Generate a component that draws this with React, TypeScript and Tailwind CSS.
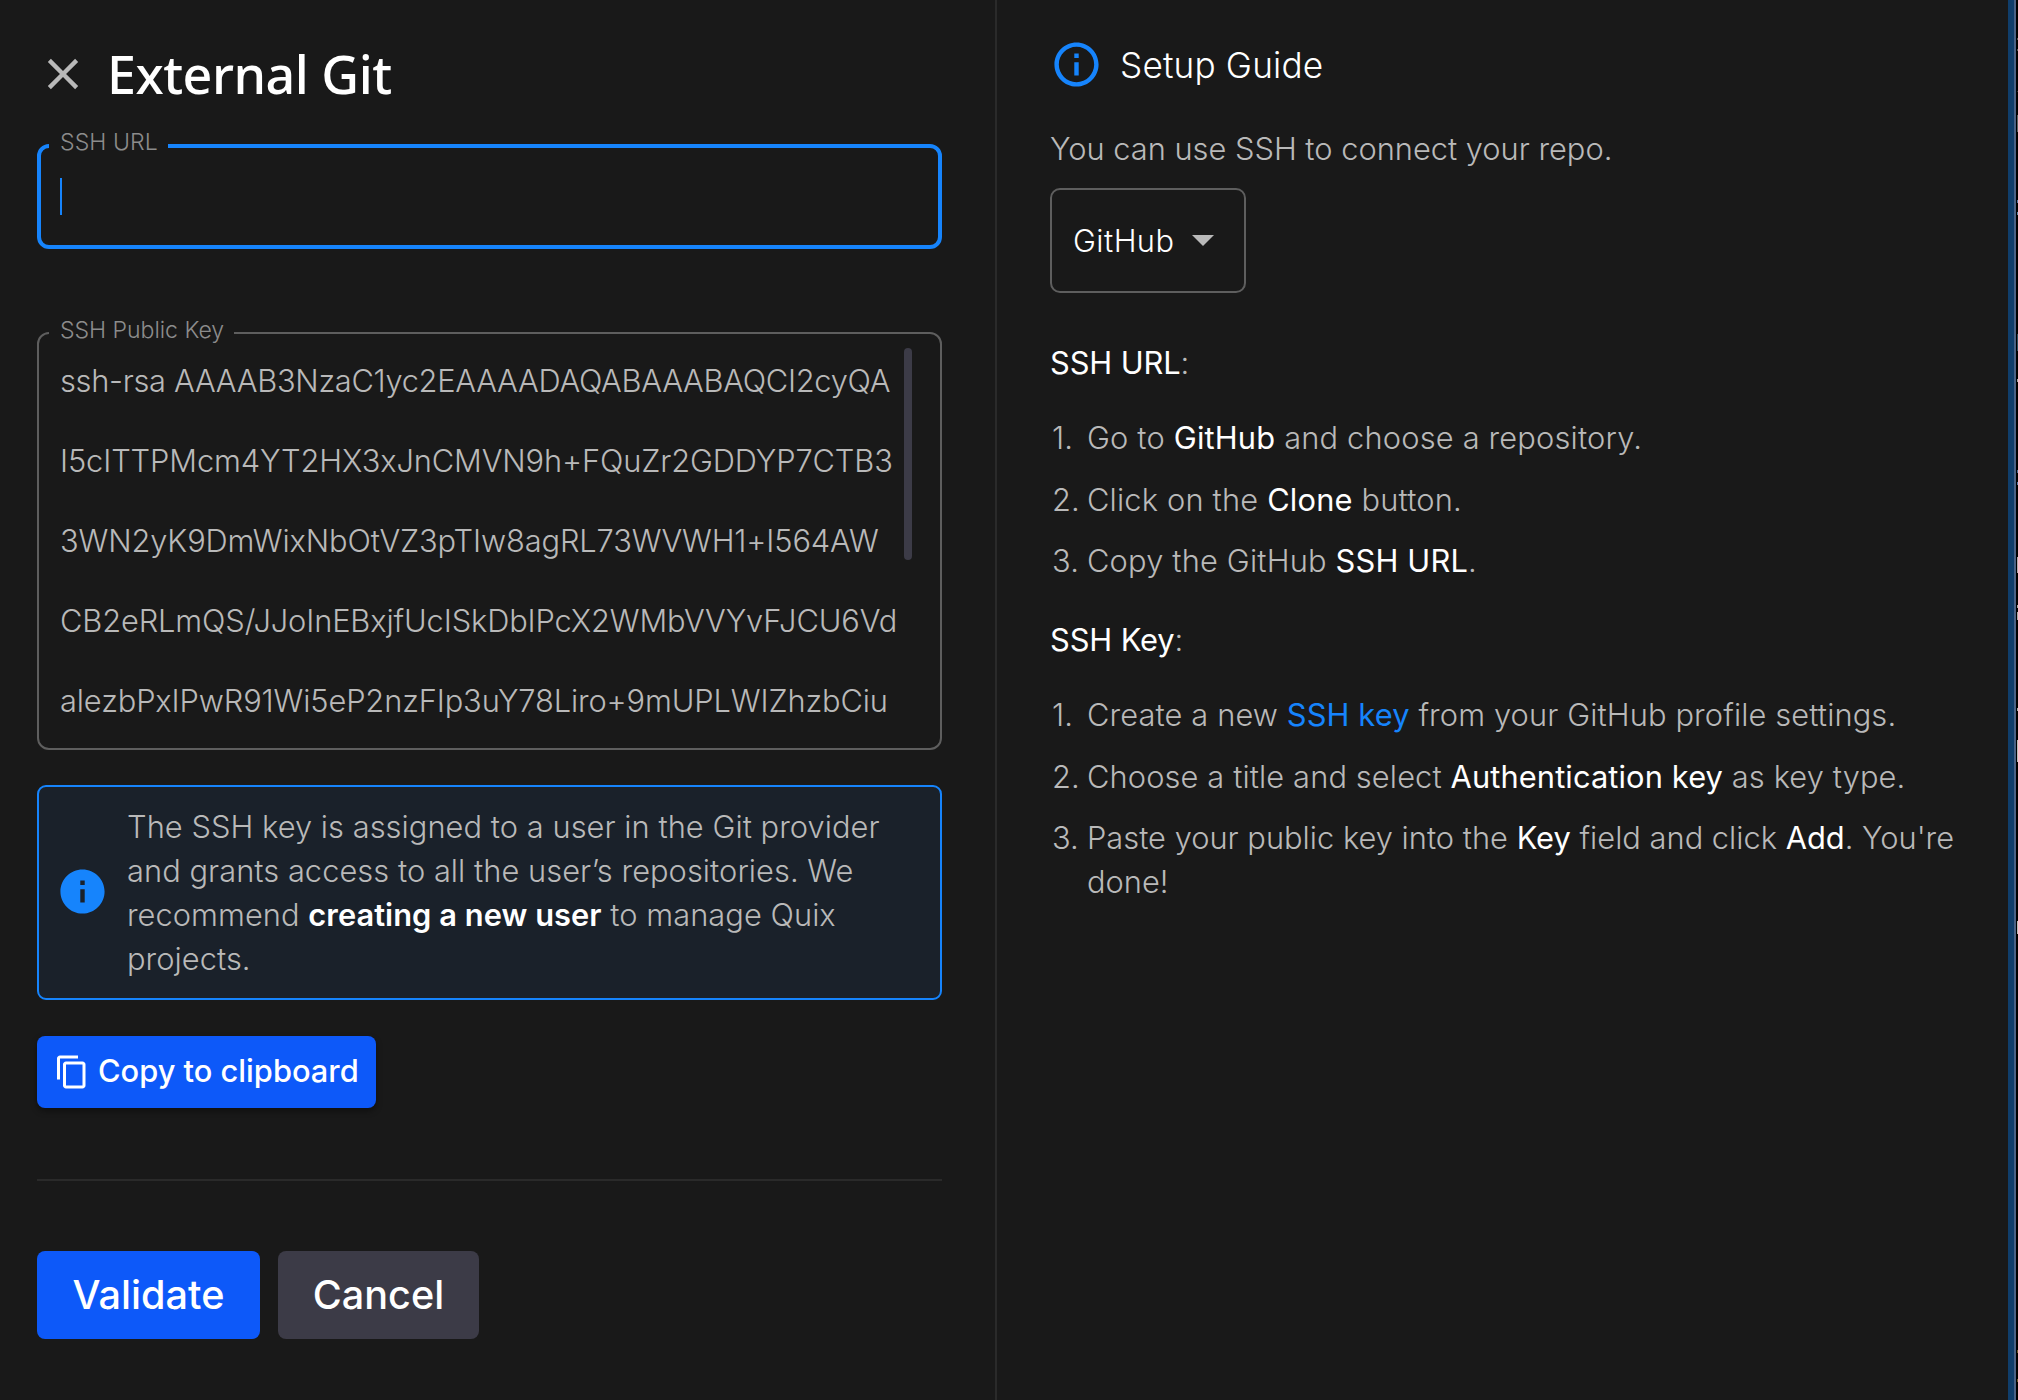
import type { ReactNode } from "react";

const keyLines = [
  "I5cITTPMcm4YT2HX3xJnCMVN9h+FQuZr2GDDYP7CTB3",
  "3WN2yK9DmWixNbOtVZ3pTIw8agRL73WVWH1+I564AW",
  "CB2eRLmQS/JJoInEBxjfUcISkDbIPcX2WMbVVYvFJCU6Vd",
  "alezbPxIPwR91Wi5eP2nzFIp3uY78Liro+9mUPLWIZhzbCiu",
];

const edgeMarks = [
  [38, 2, "#555"], [49, 2, "#555"], [91, 1, "#333"], [115, 17, "#5b6164"],
  [200, 3, "#5a78a8"], [212, 3, "#5f86a8"], [334, 17, "#2f4a5c"], [379, 3, "#aaa"],
  [470, 3, "#4f6d98"], [482, 3, "#5a78a8"], [557, 16, "#b5a9b0"], [605, 3, "#aaa"],
  [612, 8, "#aaa"], [708, 3, "#aaa"], [740, 22, "#bbb"], [921, 13, "#bbb"],
  [1350, 3, "#6b5a2a"], [1379, 3, "#6b5a2a"],
] as const;

function Strong({ children }: { children: ReactNode }) {
  return <span className="font-normal text-white">{children}</span>;
}

function Step({ n, children }: { n: number; children: ReactNode }) {
  return (
    <li className="flex">
      <span className="w-[37px] shrink-0 pl-[2px]">{n}.</span>
      <span>{children}</span>
    </li>
  );
}

export default function App() {
  return (
    <div className="flex h-[1400px] w-[2018px] overflow-hidden bg-[#191919] font-['Inter',sans-serif] text-[30.8px] leading-[44px] font-light tracking-[0.05px] text-[#b9b9b9]">
      <section className="flex w-[997px] shrink-0 flex-col border-r-2 border-[#2a2a2a] pl-[37px] pr-[53px] pt-[44px]">
        <header className="flex h-[60px] items-center">
          <svg className="size-[52px] shrink-0" viewBox="0 0 24 24" fill="currentColor">
            <path d="M19 6.41 17.59 5 12 10.59 6.41 5 5 6.41 10.59 12 5 17.59 6.41 19 12 13.41 17.59 19 19 17.59 13.41 12z" />
          </svg>
          <h1 className="ml-[18px] font-['Noto_Sans',sans-serif] text-[52px] leading-[60px] font-medium tracking-[-0.5px] whitespace-nowrap text-white">External Git</h1>
        </header>

        <fieldset className="mt-[26px] h-[119px] min-w-0 rounded-[12px] border-4 border-[#1684fc] pl-[8px]">
          <legend className="h-[32px] w-[119px] pl-[11px] text-[23.1px] leading-[25px] whitespace-nowrap text-[#8c8c8c]">SSH URL</legend>
          <div className="mt-[16px] ml-[11px] h-[37px] w-[2px] bg-[#1684fc]" />
        </fieldset>

        <fieldset className="mt-[68px] h-[433px] min-w-0 rounded-[12px] border-2 border-[#5e5e5e] pl-[10px]">
          <legend className="h-[32px] w-[185px] pl-[11px] text-[23.1px] leading-[26px] tracking-[-0.05px] whitespace-nowrap text-[#8c8c8c]">SSH Public Key</legend>
          <div className="flex justify-between pl-[11px] pr-[28px]">
            <div className="-mt-[8px] leading-[80px] tracking-[-0.12px] whitespace-nowrap">
              <p className="tracking-[-0.3px]">ssh-rsa AAAAB3NzaC1yc2EAAAADAQABAAABAQCI2cyQA</p>
              {keyLines.map((line) => <p key={line}>{line}</p>)}
            </div>
            <div className="-mt-px h-[212px] w-[8px] shrink-0 rounded-full bg-[#3c3b47]" />
          </div>
        </fieldset>

        <div className="mt-[35px] flex h-[215px] items-center rounded-[9px] border-2 border-[#1684fc] bg-[#1a212a] pl-[17px]">
          <svg className="mb-[2px] size-[53px] shrink-0" viewBox="0 0 24 24" fill="#1684fc">
            <path d="M12 2C6.48 2 2 6.48 2 12s4.48 10 10 10 10-4.48 10-10S17.52 2 12 2zm1 15h-2v-6h2v6zm0-8h-2V7h2v2z" />
          </svg>
          <p className="ml-[18px] whitespace-nowrap">
            The SSH key is assigned to a user in the Git provider<br />
            and grants access to all the user’s repositories. We<br />
            recommend <span className="font-semibold text-white">creating a new user</span> to manage Quix<br />
            projects.
          </p>
        </div>

        <button className="mt-[36px] flex h-[72px] w-[339px] items-center rounded-[8px] bg-[#0d59f9] pl-[17px] font-medium whitespace-nowrap text-white shadow-[0_3px_6px_rgba(0,0,0,0.4)]">
          <svg className="size-[36px] shrink-0" viewBox="0 0 24 24" fill="currentColor">
            <path d="M16 1H4c-1.1 0-2 .9-2 2v14h2V3h12V1zm3 4H8c-1.1 0-2 .9-2 2v14c0 1.1.9 2 2 2h11c1.1 0 2-.9 2-2V7c0-1.1-.9-2-2-2zm0 16H8V7h11v14z" />
          </svg>
          <span className="mb-[2px] ml-[8px] tracking-[0px]">Copy to clipboard</span>
        </button>

        <hr className="mt-[71px] border-t-2 border-[#2a2a2a]" />

        <div className="mt-[70px] flex gap-[18px] text-[39.6px] font-medium text-white">
          <button className="h-[88px] w-[223px] rounded-[8px] bg-[#0d59f9]">Validate</button>
          <button className="h-[88px] w-[201px] rounded-[8px] bg-[#3c3b47]">Cancel</button>
        </div>
      </section>

      <aside className="flex w-[1011px] shrink-0 flex-col pl-[53px] pt-[38px]">
        <div className="flex h-[53px] items-center">
          <svg className="size-[53px] shrink-0" viewBox="0 0 24 24" fill="#1684fc">
            <path d="M11 7h2v2h-2zm0 4h2v6h-2zm1-9C6.48 2 2 6.48 2 12s4.48 10 10 10 10-4.48 10-10S17.52 2 12 2zm0 18c-4.41 0-8-3.59-8-8s3.59-8 8-8 8 3.59 8 8-3.59 8-8 8z" />
          </svg>
          <h2 className="ml-[17px] text-[35.2px] tracking-[0.15px] text-white">Setup Guide</h2>
        </div>
        <p className="mt-[36px] tracking-[0px]">You can use SSH to connect your repo.</p>
        <button className="mt-[17px] flex h-[105px] w-[196px] items-center rounded-[10px] border-2 border-[#5e5e5e] pl-[21px] text-white">
          <span className="w-[119px] text-left tracking-[0.45px]">GitHub</span>
          <svg className="h-[11px] w-[22px]" viewBox="0 0 22 11" fill="#b9b9b9"><path d="M0 0h22L11 11z" /></svg>
        </button>
        <p className="mt-[48px] tracking-[-0.1px]"><Strong>SSH URL</Strong>:</p>
        <ol className="mt-[31px] flex flex-col gap-[17.5px] tracking-[0.18px] whitespace-nowrap">
          <Step n={1}>Go to <Strong>GitHub</Strong> and choose a repository.</Step>
          <Step n={2}>Click on the <Strong>Clone</Strong> button.</Step>
          <Step n={3}>Copy the GitHub <Strong>SSH URL</Strong>.</Step>
        </ol>
        <p className="mt-[35px] tracking-[-0.1px]"><Strong>SSH Key</Strong>:</p>
        <ol className="mt-[31px] flex flex-col gap-[17.5px] tracking-[0.12px] whitespace-nowrap">
          <Step n={1}>Create a new <span className="font-normal text-[#1684fc]">SSH key</span> from your GitHub profile settings.</Step>
          <Step n={2}>Choose a title and select <Strong>Authentication key</Strong> as key type.</Step>
          <Step n={3}><span className="tracking-[0.01px]">Paste your public key into the <Strong>Key</Strong> field and click <Strong>Add</Strong>. You're<br />done!</span></Step>
        </ol>
      </aside>

      <div className="w-[6px] shrink-0 bg-[#103e6b]" />
      <div className="w-[2px] shrink-0 bg-[#4a6285]" />
      <svg className="h-[1400px] w-[2px] shrink-0 bg-black" viewBox="0 0 2 1400">
        {edgeMarks.map(([y, h, fill]) => <rect key={y} x="1" y={y} width="1" height={h} fill={fill} />)}
      </svg>
    </div>
  );
}
